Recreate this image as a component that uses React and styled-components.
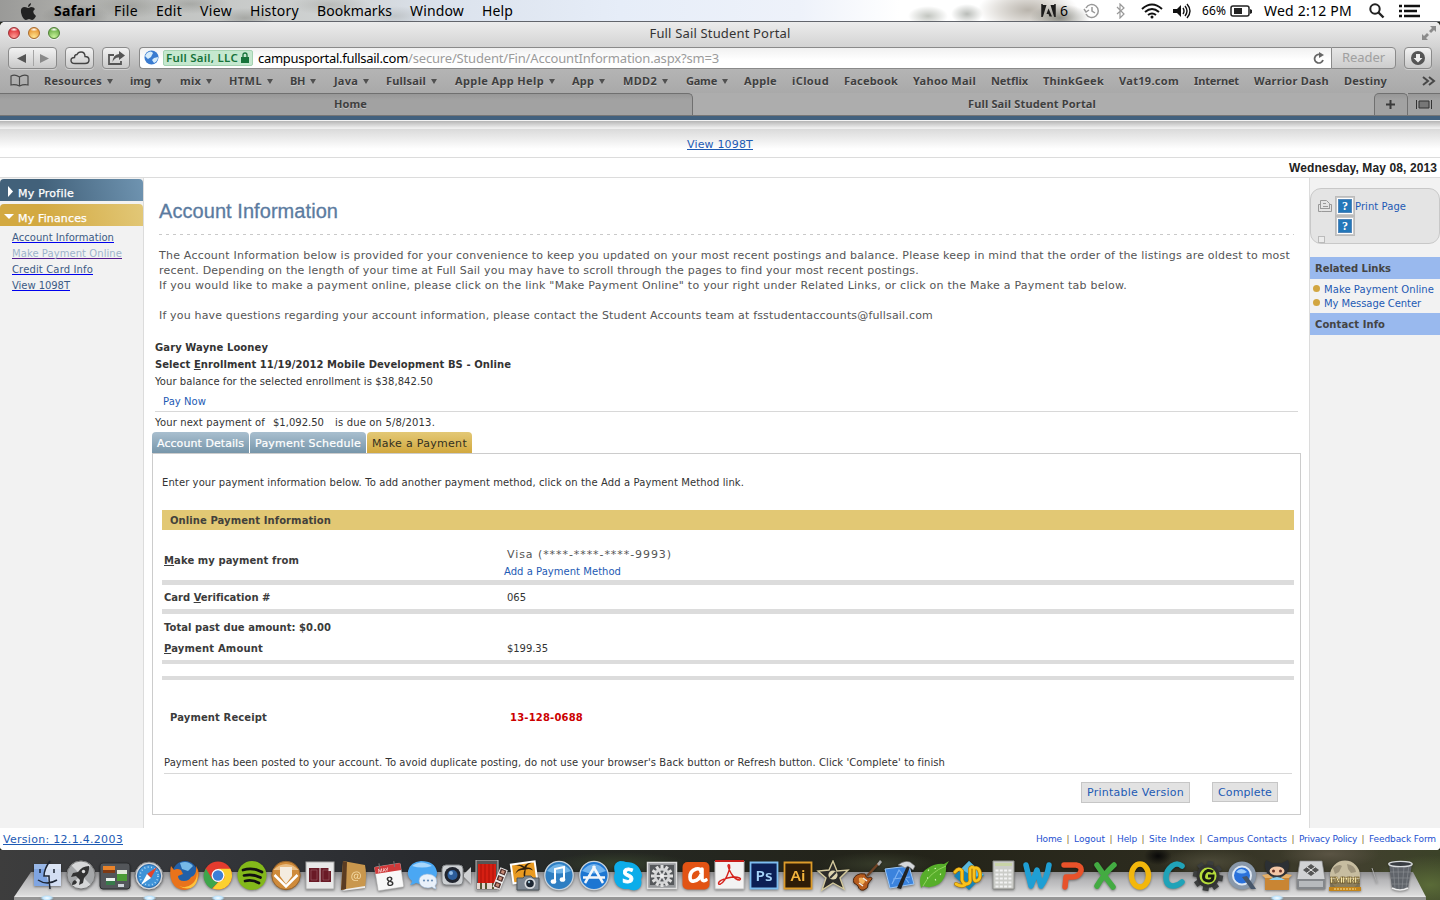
import React, { useLayoutEffect, useRef, useState } from 'react';
import styled, { createGlobalStyle, css } from 'styled-components';

const UI = '"Noto Sans", "Open Sans", sans-serif';
const VERDANA = '"DejaVu Sans", sans-serif';
const ARIAL = '"Liberation Sans", sans-serif';

const Global = createGlobalStyle`
  * { box-sizing: border-box; }
  body { margin: 0; overflow: hidden; font-family: ${VERDANA}; font-size: 10px; color: #333; }
  svg { display: block; flex: none; }
`;

const FitSpan = styled.span`
  display: inline-block;
  white-space: pre;
  flex: none;
  text-decoration: inherit;
`;

/* Tracks the text out (or in) until it is w pixels wide. */
function Fit({ w, children }) {
  const ref = useRef(null);
  const [spacing, setSpacing] = useState(0);
  useLayoutEffect(() => {
    const el = ref.current;
    const n = el.textContent.length;
    setSpacing((w - el.getBoundingClientRect().width) / n);
  }, [w]);
  return <FitSpan ref={ref} style={{ letterSpacing: `${spacing}px` }}>{children}</FitSpan>;
}

const Screen = styled.div`
  width: 1440px;
  height: 900px;
  display: flex;
  flex-direction: column;
  overflow: hidden;
  background: #25281f;
`;

/* ---------- menu bar ---------- */
const MenuBar = styled.header`
  height: 22px;
  flex: none;
  display: flex;
  align-items: center;
  padding: 0 20px;
  color: #000;
  font: 14px/21px ${UI};
  border-bottom: 1px solid #62656c;
  background:
    radial-gradient(ellipse 30px 14px at 1060px 18px, #77786fcc, transparent),
    radial-gradient(ellipse 50px 22px at 1028px 10px, #b9b4ac, #c5c0b880 60%, transparent),
    radial-gradient(ellipse 20px 10px at 928px 16px, #9a9f9699, transparent),
    radial-gradient(ellipse 16px 10px at 967px 14px, #b9bcb8, transparent),
    radial-gradient(ellipse 34px 12px at 75px 16px, #77787599, transparent),
    radial-gradient(ellipse 40px 12px at 130px 6px, #8c8d8880, transparent),
    radial-gradient(ellipse 40px 10px at 190px 4px, #8c8d8880, transparent),
    radial-gradient(ellipse 30px 10px at 245px 18px, #8c8d8890, transparent),
    radial-gradient(ellipse 40px 10px at 330px 5px, #9c9d9870, transparent),
    radial-gradient(ellipse 30px 10px at 395px 16px, #a3a7a870, transparent),
    linear-gradient(90deg, #9a9a98 0, #aaaaa7 60px, #c2c4c2 170px, #cfd2d2 330px, #dbe2ec 440px, #e6edf8 620px, #eef2fa 800px, #fff 900px, #fff 1440px);
`;
const Menus = styled.nav`
  display: flex;
  gap: 18px;
  margin-left: 18px;
  flex: 1;
`;
const Menu = styled.span`
  font-weight: ${p => (p.$bold ? 700 : 400)};
`;
const Tray = styled.div`
  display: flex;
  align-items: center;
`;
const TrayItem = styled.div`
  width: ${p => p.$w}px;
  flex: none;
  font-size: ${p => p.$size || 14}px;
  display: flex;
  align-items: center;
`;

/* ---------- browser window ---------- */
const Window = styled.section`
  height: 828px;
  flex: none;
  display: flex;
  flex-direction: column;
  border-radius: 5px 5px 4px 4px;
  overflow: hidden;
  background: #fff;
`;
const Chrome = styled.div`
  height: 71px;
  flex: none;
  display: flex;
  flex-direction: column;
  background: linear-gradient(#ececec 0, #d4d4d4 24px, #b4b4b4 48px, #a9a9a9 71px);
`;
const TitleBar = styled.div`
  height: 22px;
  display: grid;
  grid-template-columns: 100px 1fr 100px;
  align-items: center;
  font: 13px/22px ${UI};
  color: #333;
`;
const Lights = styled.div`
  display: flex;
  gap: 8px;
  padding-left: 8px;
`;
const Light = styled.i`
  width: 12px;
  height: 12px;
  border-radius: 50%;
  border: 1px solid ${p => p.$edge};
  background: radial-gradient(ellipse 4px 2px at 50% 15%, #fff, transparent), radial-gradient(circle at 50% 90%, ${p => p.$glow}, ${p => p.$mid} 75%);
  box-shadow: 0 1px 0 #ffffffa0;
`;
const Title = styled.div` text-align: center; `;
const TitleEnd = styled.div`
  display: flex;
  justify-content: flex-end;
  padding-right: 4px;
`;
const Toolbar = styled.div`
  height: 26px;
  display: flex;
  align-items: center;
  padding: 1px 8px 0;
`;
const ToolButton = styled.div`
  border: 1px solid #8a8a8a;
  border-radius: 4px;
  background: linear-gradient(#f2f2f2, #c9c9c9);
  box-shadow: 0 1px 0 #ffffff60;
  width: ${p => p.$w}px;
  height: 22px;
  margin-right: ${p => p.$after}px;
  flex: none;
  display: flex;
  align-items: center;
  justify-content: center;
`;
const Address = styled.div`
  height: 22px;
  flex: 1;
  display: flex;
  align-items: center;
  border: 1px solid #8a8a8a;
  border-right: 0;
  border-radius: 4px 0 0 4px;
  background: linear-gradient(#f1f1f1, #fff 60%);
  padding: 0 6px 0 4px;
  font: 13px/20px ${UI};
  color: #9b9b9b;
`;
const Cert = styled.div`
  height: 16px;
  width: 90px;
  margin: 0 5px 0 4px;
  padding-left: 2px;
  display: flex;
  gap: 3px;
  align-items: center;
  border: 1px solid #a5d3b2;
  border-radius: 2px;
  background: #c5e8cf;
  color: #17733a;
  font: 600 11.5px/14px ${UI};
`;
const Host = styled.span` color: #000; `;
const Spacer = styled.div` flex: 1; `;
const Reader = styled.div`
  width: 65px;
  height: 22px;
  flex: none;
  border: 1px solid #8a8a8a;
  border-radius: 0 4px 4px 0;
  background: linear-gradient(#e6e6e6, #cdcdcd);
  color: #a0a0a0;
  font: 13px/19px ${UI};
  text-align: center;
  margin-right: 8px;
`;
const Bookmarks = styled.div`
  height: 23px;
  display: flex;
  align-items: center;
  padding: 0 4px 1px 10px;
  font: 700 11px/20px ${UI};
  color: #3f3f3f;
  text-shadow: 0 1px 0 #ffffff60;
`;
const BookIcon = styled.div` width: 34px; `;
const Bookmark = styled.div`
  width: ${p => p.$cell}px;
  flex: none;
  display: flex;
  align-items: center;
  gap: 5px;
`;
const Caret = styled.i`
  border: 3.5px solid transparent;
  border-top: 5px solid #505050;
  border-bottom: 0;
`;
const TabStrip = styled.div`
  height: 23px;
  flex: none;
  display: flex;
  background: #adadad;
  border-bottom: 1px solid #767676;
  font: 700 11px/21px ${UI};
  color: #3f3f3f;
  text-shadow: 0 1px 0 #ffffff60;
`;
const WindowTab = styled.div`
  width: ${p => p.$w}px;
  flex: none;
  padding-left: ${p => p.$pad}px;
  ${p => p.$back && css`
    background: linear-gradient(#979797, #a2a2a2 6px, #a2a2a2);
    border: solid #707070;
    border-width: 1px ${p.$open ? 0 : 1}px 0 ${p.$left ? 1 : 0}px;
    border-radius: ${p.$left ? '5px' : 0} ${p.$open ? 0 : '5px'} 0 0;
    line-height: 18px;
    display: flex;
    align-items: center;
    padding-bottom: 1px;
  `}
`;

/* ---------- portal page ---------- */
const Page = styled.div`
  flex: 1;
  display: flex;
  flex-direction: column;
  background: #fff;
`;
const BrandStrip = styled.div`
  height: 5px;
  background: #42617e;
  border-bottom: 1px solid #f4f4f4;
`;
const TopLinks = styled.div`
  height: 37px;
  border-bottom: 1px solid #dcdcdc;
  background: linear-gradient(#b5b5b5, #efefef 7px, #efefef 8px, #dadada 8px, #fff 28px);
  padding-top: 16px;
  display: flex;
  justify-content: center;
  font-size: 11px;
  line-height: 16px;
`;
const Link = styled.a`
  color: ${p => p.$color || '#1d5ab4'};
  text-decoration: ${p => (p.$plain ? 'none' : 'underline')};
  text-decoration-color: ${p => p.$line || 'currentColor'};
  text-decoration-thickness: 1px;
  text-decoration-skip-ink: none;
  text-underline-offset: 1px;
`;
const DateRow = styled.div`
  height: 20px;
  border-bottom: 1px solid #dcdcdc;
  padding-right: 3px;
  text-align: right;
  font: 700 12px/20px ${ARIAL};
  color: #222;
`;
const Columns = styled.div`
  height: 650px;
  display: grid;
  grid-template-columns: 144px 1165px 131px;
`;
const Sidebar = styled.aside`
  background: #f2f2f2;
  border-right: 1px solid #dcdcdc;
  padding-top: 1px;
`;
const SideHead = styled.div`
  height: 22px;
  margin-bottom: 3px;
  padding: 7px 0 0 ${p => p.$pad}px;
  display: flex;
  gap: ${p => p.$gap}px;
  align-items: flex-start;
  border-radius: 4px 4px 0 0;
  background: linear-gradient(75deg, ${p => p.$from} 30%, ${p => p.$to});
  color: #fff;
  font-size: 11px;
  line-height: 16px;
  -webkit-text-stroke: .25px #fff;
`;
const SideLinks = styled.div`
  display: flex;
  flex-direction: column;
  padding: 1px 0 0 12px;
  line-height: 16px;
`;
const Main = styled.main`
  padding: 0 9px 0 8px;
  background: #fff;
`;
const Heading = styled.h1`
  margin: 0 6px 0 7px;
  height: 57px;
  padding-top: 21px;
  font: 400 20px/24px ${ARIAL};
  color: #5b7b9f;
  -webkit-text-stroke: .3px #5b7b9f;
  background: repeating-linear-gradient(90deg, #c9c9c9 0 3px, transparent 3px 7px) 0 56px / 1135px 1px no-repeat;
`;
const Intro = styled.div`
  margin: 13px 7px 16px;
  color: #555;
  font-size: 11px;
  line-height: 15px;
`;
const Line = styled.div`
  height: ${p => p.$h || 15}px;
  line-height: ${p => p.$h || 15}px;
  padding-left: ${p => p.$pad || 0}px;
  font-weight: ${p => (p.$bold ? 700 : 400)};
  color: ${p => p.$color || 'inherit'};
  display: flex;
`;
const Summary = styled.div`
  margin: 0 2px 0 3px;
  height: 93px;
  color: #333;
`;
const Rule = styled.div`
  height: 1px;
  background: #d8d8d8;
  margin: ${p => p.$m || 0};
`;
const Tabs = styled.div`
  display: flex;
  gap: 1px;
  height: 21px;
`;
const Tab = styled.div`
  width: ${p => p.$w}px;
  height: 21px;
  padding: 1px 0 0 5px;
  border-radius: 4px 4px 0 0;
  font-size: 11px;
  line-height: 22px;
  color: ${p => (p.$on ? '#33301f' : '#fff')};
  background: ${p => (p.$on ? 'linear-gradient(#e3c876, #d2a93f)' : 'linear-gradient(#a9bfcf, #7796aa)')};
  -webkit-text-stroke: ${p => (p.$on ? '0' : '.2px #fff')};
`;
const Panel = styled.section`
  width: 1149px;
  height: 362px;
  border: 1px solid #ccc;
  padding: 20px 6px 0 9px;
  display: flex;
  flex-direction: column;
`;
const Band = styled.div`
  height: ${p => p.$h}px;
  line-height: ${p => p.$h}px;
  padding: 1px 0 0 ${p => p.$pad}px;
  margin-top: ${p => p.$top || 0}px;
  background: ${p => p.$bg};
  font-weight: 700;
  color: ${p => p.$color || '#42413b'};
`;
const FormRow = styled.div`
  display: grid;
  grid-template-columns: ${p => p.$label || 343}px 1fr;
  height: ${p => p.$h}px;
  align-items: ${p => p.$align || 'center'};
  padding: ${p => p.$p || '2px 0 0 2px'};
`;
const Label = styled.div`
  font-weight: 700;
  color: #3b3b3b;
  line-height: 16px;
  height: 16px;
`;
const Value = styled.div`
  line-height: 16px;
  height: 16px;
  color: ${p => p.$color || '#333'};
  font-weight: ${p => (p.$bold ? 700 : 400)};
`;
const Stack = styled.div`
  display: flex;
  flex-direction: column;
  margin: 4px 0 0 -3px;
  line-height: 17px;
`;
const Method = styled.span`
  padding-left: 3px;
  font-size: 11px;
  color: #555;
`;
const ThickRule = styled.div`
  height: ${p => p.$h || 4}px;
  flex: none;
  margin-top: ${p => p.$top || 0}px;
  background: #dcdcdc;
`;
const Actions = styled.div`
  display: flex;
  gap: 22px;
  justify-content: flex-end;
  align-items: flex-start;
  padding: 8px 16px 0;
`;
const Action = styled.button`
  height: ${p => p.$h}px;
  width: ${p => p.$w}px;
  padding: 1px 0 0;
  border: 1px solid #c6c6c6;
  background: #e2e2e2;
  color: #1d5ab4;
  font: 11px/18px ${VERDANA};
`;
const Rail = styled.aside`
  border-left: 1px solid #dcdcdc;
  background: #f2f2f2;
  padding-top: 10px;
`;
const PrintBox = styled.div`
  height: 56px;
  border: 1px solid #c8c8c8;
  border-radius: 11px;
  background: #e4e4e4;
  padding: 7px 0 0 7px;
  margin-bottom: 13px;
  display: grid;
  grid-template-columns: 17px 20px 1fr;
  grid-template-rows: 20px 20px 8px;
  line-height: 22px;
`;
const Help = styled.div`
  width: 20px;
  height: 20px;
  border: 1px solid #bcbcbc;
  outline: 1px solid #c9c9c9;
  outline-offset: -2px;
  padding: 2px;
  background: #fff;
  grid-column: 2;
`;
const HelpMark = styled.div`
  height: 14px;
  border: 1px solid #5186b9;
  background: #2377b9;
  color: #fff;
  font: 700 12px/12px "Liberation Serif", serif;
  text-align: center;
`;
const Corner = styled.i`
  width: 7px;
  height: 7px;
  border: 1px solid #bbb;
  background: #ececec;
`;
const RailLinks = styled.div`
  height: 34px;
  padding: 4px 3px 2px;
`;
const RailLink = styled.div`
  height: 14px;
  line-height: 14px;
  display: flex;
  gap: 4px;
`;
const Dot = styled.i`
  width: 7px;
  height: 7px;
  margin-top: 2px;
  border-radius: 50%;
  background: #d2a641;
`;
const Footer = styled.footer`
  height: 22px;
  display: flex;
  align-items: center;
  padding: 0 4px 0 3px;
  font-size: 11px;
`;
const FooterLinks = styled.div`
  margin-left: auto;
  display: flex;
  font-size: 9px;
  line-height: 22px;
`;
const Bar = styled.span`
  width: 12px;
  text-align: center;
  color: #8a6a2c;
`;

/* ---------- dock ---------- */
const Desktop = styled.div`
  height: 50px;
  flex: none;
  position: relative;
  background:
    radial-gradient(ellipse 14px 9px at 1158px 6px, #080808, transparent),
    radial-gradient(ellipse 60px 30px at 1430px 35px, #5a6b38, transparent),
    radial-gradient(ellipse 50px 14px at 1330px 4px, #5a5444, transparent),
    radial-gradient(ellipse 50px 14px at 1210px 12px, #4c4a38, transparent),
    radial-gradient(ellipse 60px 12px at 880px 14px, #363b2a, transparent),
    radial-gradient(ellipse 70px 12px at 620px 14px, #35402c, transparent),
    linear-gradient(90deg, #3d3d3d 0, #35373b 180px, #292b2f 420px, #252823 600px, #232319 900px, #2c2b1e 1150px, #42402f 1350px, #3b4228 1440px);
`;
const Shelf = styled.div`
  position: absolute;
  left: 14px;
  top: 22px;
  width: 1412px;
  height: 28px;
  background: linear-gradient(#8e8e90 0, #b5b5b7 8px, #dcdcdc 23px, #ececec 25px, #969696 25px);
  clip-path: polygon(17px 0, 1399px 0, 1412px 25px, 1412px 28px, 0 28px, 0 25px);
`;
const Apps = styled.div`
  position: absolute;
  left: 30px;
  top: 10px;
  height: 40px;
  display: flex;
`;
const DockApp = styled.div`
  width: ${p => p.$w || 34.17}px;
  height: 40px;
  flex: none;
  filter: drop-shadow(0 1px 1px #0006);
  background: ${p => (p.$run ? 'radial-gradient(ellipse 7px 3px at 50% 38px, #fff, #bfe6ff 60%, transparent)' : 'none')};
`;

const B = 'Noto Sans, sans-serif';
const petals = (n, f) => Array.from({ length: n }, (_, i) => f(i, (360 / n) * i));

const icons = [
  ['finder', <><path d="M4 4h27v22H4z" fill="#7fa5e2" /><path d="M18 4h13v22H19l-2-9h-3q0-8 4-13" fill="#d3def2" /><path d="M4 4h27v5H4z" fill="#fff" opacity=".2" /><path d="M20 1q-6 8-6 15h5q0 6 1 13M10 9v4M24 9v4M8 20q9 6 19 0" fill="none" stroke="#1c2432" strokeWidth="1.5" /></>, 1],
  ['rocket', <><circle cx="17" cy="15" r="14.3" fill="#a5a7a9" /><path d="M17 15L7 5Q17-3 27 5zM17 15l10 10Q17 33 7 25z" fill="#d6d7d8" /><circle cx="17" cy="15" r="14" fill="none" stroke="#777" /><path d="M25 6q-7 0-11 6l-5 1-2 4 5-1 4 4-1 5 4-2 1-5q6-5 5-12M11 20q-3 1-3 5 4 0 5-3z" fill="#333" /><circle cx="19.500" cy="11.500" r="1.700" fill="#ddd" /></>],
  ['mission', <><rect x="2" y="3" width="30" height="26" rx="3" fill="#53565a" stroke="#2b2c2e" /><path d="M5 6h12v7H5z" fill="#e9832a" /><path d="M5 10h12v3H5z" fill="#7f3b15" /><path d="M19 10h10v11H19z" fill="#4b9b35" /><path d="M19 10h10v4H19z" fill="#dfe6d8" /><path d="M8 18h9v7H8z" fill="#edf2ef" /><path d="M8 21h9v4H8z" fill="#387a4b" /><path d="M20 24h6v3h-6z" fill="#cfd4da" /></>],
  ['safari', <><circle cx="17" cy="16" r="14" fill="#d3d5d8" stroke="#77797c" /><circle cx="17" cy="16" r="11.500" fill="#3f93d8" stroke="#2c68a7" /><circle cx="17" cy="16" r="9" fill="none" stroke="#b9dcf6" strokeDasharray="1 2.4" strokeWidth="1.600" /><path d="M25 7l-6 11-4-4z" fill="#e2452d" /><path d="M9 25l6-11 4 4z" fill="#fff" /></>, 1],
  ['firefox', <><circle cx="18" cy="13.5" r="12.5" fill="#2260a8" /><path d="M13 3q8-3 13 3l-5 5-6-2z" fill="#76b9e8" /><path d="M4 6l3 4q3-2 7 0l2 4-5 2q0 5 6 5 5 0 7-4 6-2 5-11 5 7 1 15-4 8-12 9-9 0-13-8-3-8-1-16" fill="#e9731b" /><path d="M29 8q3 10-4 16-6 5-13 2 9 5 15 0 6-7 2-18" fill="#fdc23c" /></>],
  ['chrome', <><circle cx="17" cy="15.500" r="14" fill="#e33b2e" /><path d="M4.900 8.500L11 19l6 3.500-6.500 6.200A14 14 0 0 1 4.900 8.500" fill="#3da64a" /><path d="M17 8.800h12.300A14 14 0 0 1 11.500 28.400L17 22.500l6-3.500q2-6-6-10.200" fill="#fbd02f" /><circle cx="17" cy="15.500" r="6.500" fill="#fff" /><circle cx="17" cy="15.500" r="5.200" fill="#3d7fd6" /></>, 1],
  ['spotify', <><circle cx="17" cy="15.500" r="14.500" fill="#83b81a" /><path d="M8 10q10-3 19 2M9 15.500q9-2 16.500 2M10 21q7-2 14 2" fill="none" stroke="#111" strokeWidth="2.700" strokeLinecap="round" /></>],
  ['downloads', <><circle cx="17" cy="15.500" r="14.200" fill="#cf8b3b" stroke="#94622b" /><path d="M4 10q13-12 26 0" fill="#e9bd83" /><path d="M11 7h12v9l-6 8-6-8z" fill="#f4ece0" /><path d="M5.500 15L17 26.500 28.500 15" fill="none" stroke="#fff" strokeWidth="2.500" /></>],
  ['photos', <><rect x="3" y="2" width="28" height="27" fill="#e8e8e8" stroke="#aaa" /><rect x="6" y="8" width="10.500" height="14" fill="#6a1a26" /><rect x="17.500" y="8" width="10.500" height="14" fill="#6a1a26" /><path d="M8 10h6v10H8zM20 10h6v10h-6z" fill="none" stroke="#9c6068" strokeWidth=".6" /><path d="M25.500 8H28v3h-2.500z" fill="#eee" /></>],
  ['contacts', <><path d="M6 1l22 4q2 9 0 23l-24 2z" fill="#c9974d" /><path d="M6 1l4 1-1 27-5 1z" fill="#5b3c22" /><path d="M9 29l19-3v2L5 31z" fill="#eee" /><text x="19" y="20" fontFamily={B} fontSize="12" fill="#f3d7a0" textAnchor="middle" transform="rotate(8 19 18)">@</text></>],
  ['calendar', <g transform="rotate(-9 17 16)"><rect x="4" y="5" width="26" height="24" rx="1" fill="#f8f8f8" stroke="#aaa" strokeWidth=".5" /><path d="M4 5h26v7H4z" fill="#d0393a" /><path d="M9 2v6M24 2v6" stroke="#777" /><text x="7" y="11" fontSize="5" fontFamily={B} fill="#fff">MAY</text><text x="17" y="26" fontSize="13" fontFamily={B} fontWeight="600" fill="#333" textAnchor="middle">8</text></g>],
  ['messages', <><path d="M4 25q2-2 2-4-5-4-4-10Q4 2 15 1q14 0 16 11 0 11-15 12-4 0-6-1-3 2-6 2" fill="#4aa7f3" /><path d="M6 6q9-7 20 0-10 3-20 0" fill="#a7d6fb" /><path d="M30 29q0-2-1-3 3-3 1-8-3-4-9-4-8 1-8 7 1 7 9 7 2 0 4-1 2 2 4 2" fill="#e9f1fa" stroke="#9bb8d8" strokeWidth=".6" /><circle cx="18" cy="20.500" r="1.100" fill="#6d90b7" /><circle cx="22" cy="20.500" r="1.100" fill="#6d90b7" /><circle cx="26" cy="20.500" r="1.100" fill="#6d90b7" /></>],
  ['facetime', <><rect x="2" y="5" width="21" height="20" rx="4" fill="#cdd0d3" stroke="#808386" /><path d="M24 14l7-7v17l-7-7z" fill="#cfd1d3" /><circle cx="12.500" cy="15" r="8" fill="#20242e" /><circle cx="12.500" cy="15" r="5" fill="#2c5d9b" /><circle cx="11" cy="13" r="2" fill="#91bce8" /></>],
  ['photobooth', <><path d="M2 0h22v30H2z" fill="#555" stroke="#bbb" /><path d="M4 4h18v19H4z" fill="#d51f12" /><path d="M7 4v19M11 4v19M15 4v19M19 4v19" stroke="#a31008" strokeWidth=".8" /><path d="M3 23h20v6H3z" fill="#e2d7d0" /><path d="M7 23v6M12 23v6M19 23v6" stroke="#553" strokeWidth="2" /><g transform="rotate(22 26 19)"><path d="M22 8h8v21h-8z" fill="#eee" /><path d="M23 9h6v5h-6zM23 16h6v5h-6zM23 23h6v5h-6z" fill="#53302b" /><path d="M24.500 10h3v3h-3zM24.500 17h3v3h-3zM24.500 24h3v3h-3z" fill="#c98d78" /></g></>],
  ['iphoto', <><g transform="rotate(-8 15 12)"><path d="M3 2h26v21H3z" fill="#fff" /><path d="M5 4h22v17H5z" fill="#e99a21" /><path d="M16 21q-2-7 1-11-7-1-10 3 3-6 9-5-5-4-8-3 6-2 9 2 3-4 8-3-5 1-6 4 5 0 6 4-3-3-7-2-2 5-1 11z" fill="#30200c" /></g><path d="M9 18h6l2-2h6l2 2h6v12H9z" fill="#7d8792" stroke="#4f565d" /><circle cx="22" cy="23.500" r="5.500" fill="#d9dcdf" /><circle cx="22" cy="23.500" r="3.800" fill="#1d2733" /><circle cx="21" cy="22" r="1.200" fill="#9bc" /></>],
  ['itunes', <><circle cx="17" cy="15.500" r="14.200" fill="#2e7ec2" stroke="#c9d3dc" strokeWidth="1.300" /><path d="M5 11q12-14 24 0-12 5-24 0" fill="#6fb2e6" /><path d="M13 21V9l9-2v12" fill="none" stroke="#fff" strokeWidth="2" /><ellipse cx="11.500" cy="21.500" rx="2.800" ry="2.300" fill="#fff" /><ellipse cx="20.500" cy="19.500" rx="2.800" ry="2.300" fill="#fff" /></>],
  ['appstore', <><circle cx="17" cy="15.500" r="14.200" fill="#1d76d2" stroke="#c9d3dc" strokeWidth="1.300" /><path d="M5 11q12-14 24 0-12 5-24 0" fill="#6fb2ee" /><path d="M8 23L18 6M26 23L16 6M6 17.500h22" fill="none" stroke="#f3f6fa" strokeWidth="2.500" /></>],
  ['skype', <><path d="M9 1q4 0 6 1 13 0 16 13 0 2-1 4 2 9-5 11-4 1-7-1Q4 30 3 17q0-2 1-4Q1 3 9 1" fill="#0cadea" /><text x="17" y="23" fontSize="21" fontFamily={B} fontWeight="700" fill="#fff" stroke="#fff" strokeWidth=".8" textAnchor="middle">S</text></>],
  ['settings', <><rect x="2.500" y="2.500" width="29" height="26" fill="#97999c" stroke="#e0e0e0" strokeWidth="1.500" /><path d="M5 5h24v20H5z" fill="#55585b" /><g transform="translate(17 16)">{petals(12, (i, a) => <path key={i} d="M-1.500-11h3v5h-3z" fill="#dedede" transform={`rotate(${a})`} />)}<circle r="8" fill="#d5d6d7" /><circle r="5.500" fill="#55585b" />{petals(3, (i, a) => <path key={i} d="M-1-6h2v12h-2z" fill="#d5d6d7" transform={`rotate(${a + 30})`} />)}<circle r="2" fill="#eee" /></g></>],
  ['aptana', <><rect x="3.500" y="2" width="27" height="27.500" rx="5" fill="#e25314" /><path d="M23 9v9q0 4 4 2M22 12q0-4-5-3-6 2-6 8 0 5 4 4 6-1 8-9" fill="none" stroke="#fff" strokeWidth="3.600" strokeLinecap="round" /></>],
  ['acrobat', <><path d="M2 1h29v28H2z" fill="#f3f3f3" stroke="#bbb" /><path d="M2 0h29v2H2z" fill="#c71f1b" /><path d="M15 6q0-2 1.500-1 1 3-1 7-3 9-8 12-2 1-2-1 1-3 9-5 8-2 12 0 2 1 0 2-4 0-8-6-3-5-3.500-8" fill="none" stroke="#d5221c" strokeWidth="1.400" /></>],
  ['ps', <><path d="M3.500 2.500h27v26h-27z" fill="#0b1f55" stroke="#7cbdf0" strokeWidth="1.800" /><text x="17" y="21" fontSize="15" fontFamily={B} fontWeight="600" fill="#a5d4fa" textAnchor="middle" textLength="17" lengthAdjust="spacingAndGlyphs">Ps</text></>],
  ['ai', <><path d="M3.500 2.500h27v26h-27z" fill="#2e1c07" stroke="#dd9b2a" strokeWidth="1.800" /><text x="17" y="21" fontSize="15" fontFamily={B} fontWeight="600" fill="#f4b43c" textAnchor="middle" textLength="15" lengthAdjust="spacingAndGlyphs">Ai</text></>],
  ['imovie', <><path d="M17 1l4 10 11-1-8 8 4 11-11-6-11 7 4-12-8-7 11-1z" fill="#2c2b28" stroke="#d4c99c" strokeWidth="1.400" /><circle cx="17" cy="15" r="4.600" fill="#ddd3ad" /><path d="M14 18l6-6" stroke="#333" strokeWidth="2" /></>],
  ['garageband', <><path d="M17 16L29 3" stroke="#6f4325" strokeWidth="2.500" /><path d="M27 4l3-4 2 2-3 4z" fill="#aaa" /><path d="M15 14q-5-1-8 1-5 3-3 8 2 1 4 3 1 5 6 4 5-2 4-6 2-3 4-5 0-3-4-1-2 0-3-4" fill="#b65b1d" stroke="#4d260f" /><path d="M9 18q4-2 6 3-1 4-3 3-4-2-3-6" fill="#f2b25d" /><path d="M9 23l4 3M13 18l4 3" stroke="#eee" strokeWidth="1.500" /></>],
  ['xcode', <><path d="M1 9l24-3 5 18-24 4z" fill="#3b83dd" stroke="#9cc7f5" /><path d="M8 24L15 10l10 13M9 19l17-2" fill="none" stroke="#7db2f3" strokeWidth="1.200" /><path d="M23 6l3 1-9 22-4-1z" fill="#222" /><path d="M14 5q6-5 12-3l5 4-2 4-5-4-3 2q-3-3-7-3" fill="#d5d8da" stroke="#777" strokeWidth=".6" /></>],
  ['leaf', <><path d="M3 28Q-1 14 10 8q8-5 16-4l5-3-3 5q1 12-7 18-8 5-16 2z" fill="#57ae2a" /><path d="M5 26Q12 12 28 6" fill="none" stroke="#8fd35c" /><path d="M10 10l1 .5M17 8l.5 1M9 18h1M17 20l1-.5M22 14l1 .5" stroke="#d5f0b4" strokeWidth="1.500" /></>],
  ['w', <><path d="M17 1l15 14-15 15L2 16z" fill="#1684b6" /><path d="M17 1l15 14-10 2L9 9z" fill="#5bb8dc" /><path d="M3 12q4-5 7-1v9q1 4 5 4 4-1 3-6V9q1-3 4-1v9q0 4 2 4 5-1 4-8-1-5-4-5M4 24q5 3 9 1" fill="none" stroke="#a8760c" strokeWidth="4" strokeLinecap="round" /><path d="M3 12q4-5 7-1v9q1 4 5 4 4-1 3-6V9q1-3 4-1v9q0 4 2 4 5-1 4-8-1-5-4-5M4 24q5 3 9 1" fill="none" stroke="#f9c21c" strokeWidth="2.800" strokeLinecap="round" /></>],
  ['calculator', <><path d="M7 1h21v28H7z" fill="#cbccc8" stroke="#8c8d89" /><path d="M9 3h17v3H9z" fill="#c8d3a6" /><path d="M9.500 10.500h16M9.500 14.500h16M9.500 18.500h16M9.500 22.500h16M9.500 26.500h16" stroke="#f2f2f2" strokeWidth="2.200" strokeDasharray="3 1.300" /></>],
  ['word', <path d="M5 5l5 21 6-16 4 16Q26 18 28 5" fill="none" stroke="#1f9fd4" strokeWidth="5.500" strokeLinejoin="round" strokeLinecap="round" />],
  ['powerpoint', <path d="M9 5h12q6 1 5 6-2 6-9 6h-6l-1 10" fill="none" stroke="#e8522a" strokeWidth="5.500" strokeLinejoin="round" strokeLinecap="round" />],
  ['excel', <path d="M8 5q6 9 16 22M25 5Q15 14 8 26" fill="none" stroke="#43ab42" strokeWidth="5.500" strokeLinecap="round" />],
  ['outlook', <ellipse cx="17" cy="15.500" rx="8.500" ry="11.500" fill="none" stroke="#f3b70b" strokeWidth="5.500" />],
  ['communicator', <path d="M25 6q-5-4-10 0-6 5-6 11 0 9 7 9 5 0 9-4" fill="none" stroke="#20a3b8" strokeWidth="5.500" strokeLinecap="round" />],
  ['gamemaker', <g transform="translate(17 16)">{petals(8, (i, a) => <path key={i} d="M-3-15h6v6h-6z" fill="#3b3d3d" transform={`rotate(${a + 10})`} />)}<circle r="11.500" fill="#333" /><circle r="8.500" fill="#b5dc3a" /><path d="M5-4Q-1-8-4-2q-2 7 5 7 4 0 4-5H0" fill="none" stroke="#181b12" strokeWidth="3" /></g>],
  ['quicktime', <><circle cx="17" cy="15.500" r="14" fill="#8998aa" /><circle cx="17" cy="15.500" r="9" fill="#2a71db" stroke="#dfe8f3" strokeWidth="2" /><path d="M11 12q5-6 11 0-5 3-11 0" fill="#99cafb" /><path d="M17 17l9 12h5l-4-6-5-7z" fill="#46566a" /></>],
  ['github', <><path d="M6 0l6 3h10l6-3q2 6 0 10-1 7-11 7T6 10q-2-5 0-10" fill="#2c3034" /><ellipse cx="17" cy="11" rx="7.500" ry="4.500" fill="#f2c6a5" /><circle cx="13.500" cy="11" r="1.500" fill="#6a3328" /><circle cx="20.500" cy="11" r="1.500" fill="#6a3328" /><path d="M13 16h8v4h-8z" fill="#353b42" /><path d="M5 18h24v12H5z" fill="#c98533" /><path d="M5 18l-3-3 6-1 5 4zM29 18l3-3-6-1-5 4z" fill="#e7b066" /><path d="M9 20q8-6 16 0z" fill="#8ed0ee" /></>, 1],
  ['bootcamp', <><path d="M6 1h22l3 18v10H3V19z" fill="#d1d2d4" stroke="#888" strokeWidth=".7" /><path d="M3 19h28v10H3z" fill="#84878b" /><path d="M5 21h24v6H5z" fill="#b7babd" /><path d="M17 4l8 6-8 6-8-6z" fill="#555" /><path d="M13 7l8 6M21 7l-8 6" stroke="#eee" /></>],
  ['empire', <><circle cx="17" cy="15.500" r="15" fill="#c7bda0" /><path d="M5 8q6-5 9-2l-3 6-4 2zM19 4q8 1 9 8l-5 1-3-4z" fill="#9e947c" /><path d="M2 19h30v8H2z" fill="#776947" opacity=".75" /><text x="17" y="23" fontFamily="Liberation Serif, serif" fontSize="9" fontWeight="700" fill="#fae9a7" stroke="#574015" strokeWidth=".3" textAnchor="middle" textLength="30">EMPIRE</text><path d="M1 27h32v4H1z" fill="#c3851b" /><path d="M6 29h22" stroke="#ffe393" strokeDasharray="2 1" /></>],
  ['divider', <path d="M10 8l5 15" stroke="#aaa" />, 0, 22],
  ['trash', <><path d="M5 4l3 24q9 4 16 0l4-24z" fill="#60646a" /><path d="M9 6l2 22M14 7l1 22M20 7l-2 22M25 5l-3 23M6 12h21M7 18h19M8 24h17" stroke="#8d9196" strokeWidth=".6" /><ellipse cx="16.500" cy="4" rx="11.800" ry="2.700" fill="#383c41" stroke="#d9dcde" strokeWidth="1.300" /><path d="M8 28q8 4 16 0" fill="none" stroke="#eee" strokeWidth="1.500" /></>],
];

/* label, text width, cell width, has a folder arrow */
const bookmarks = [
  ['Resources', 58, 86, 1], ['img', 21, 50, 1], ['mix', 21, 49, 1], ['HTML', 33, 61, 1], ['BH', 15, 44, 1],
  ['Java', 24, 52, 1], ['Fullsail', 40, 69, 1], ['Apple App Help', 89, 117, 1], ['App', 22, 51, 1], ['MDD2', 34, 63, 1],
  ['Game', 31, 58, 1], ['Apple', 33, 48], ['iCloud', 37, 52], ['Facebook', 54, 69], ['Yahoo Mail', 63, 78],
  ['Netflix', 37, 52], ['ThinkGeek', 61, 76], ['Vat19.com', 60, 75], ['Internet', 45, 60], ['Warrior Dash', 75, 90], ['Destiny', 43, 78],
];
const menus = [['Safari', 42], ['File', 24], ['Edit', 26], ['View', 32], ['History', 49], ['Bookmarks', 75], ['Window', 54], ['Help', 31]];
const footerLinks = [['Home', 26], ['Logout', 31], ['Help', 20], ['Site Index', 46], ['Campus Contacts', 80], ['Privacy Policy', 58], ['Feedback Form', 67]];

const Svg = ({ w, h, children }) => <svg width={w} height={h} viewBox={`0 0 ${w} ${h}`} fill="none">{children}</svg>;

function TopMenu() {
  return (
    <MenuBar>
      <Svg w={16} h={18}><path d="M11 1q0 3-3 4 0-3 3-4M8 6q1 0 3-1 3 0 4 2-4 3 1 7-2 4-4 4l-3-1-3 1Q4 18 2 14q-3-8 2-9 2 0 4 1" fill="#222" /></Svg>
      <Menus>{menus.map(([t, w], i) => <Menu key={t} $bold={i === 0}><Fit w={w}>{t}</Fit></Menu>)}</Menus>
      <Tray>
        <TrayItem $w={42}><Svg w={19} h={14}><path d="M1 1h4.500L2 12.500H1zM9.500 1H14v11.500h-1zM7.500 4.500l3.500 8H8.500l-1-2.500h-2z" fill="#1c1c1c" /><path d="M1 0v13M14 0v13" stroke="#1c1c1c" strokeWidth="1.500" /></Svg><Fit w={8}>6</Fit></TrayItem>
        <TrayItem $w={33}><Svg w={18} h={16}><path d="M3 11a6.500 6.500 0 1 0 0-6M1 6l2 3 3-2M9 4v4l3 2" stroke="#999" strokeWidth="1.500" /></Svg></TrayItem>
        <TrayItem $w={25}><Svg w={10} h={16}><path d="M1 4l7 7-4 4V1l4 4-7 6" stroke="#999" strokeWidth="1.200" /></Svg></TrayItem>
        <TrayItem $w={32}><Svg w={22} h={16}><path d="M1 6q10-9 20 0M4 9q7-6 14 0M7 12q4-3 8 0" stroke="#111" strokeWidth="2" /><circle cx="11" cy="14" r="1.500" fill="#111" /></Svg></TrayItem>
        <TrayItem $w={29}><Svg w={18} h={16}><path d="M0 6h4l4-4v12l-4-4H0z" fill="#111" /><path d="M10 5q2 3 0 6M12 3q4 5 0 10M14 1q6 7 0 14" stroke="#111" strokeWidth="1.400" /></Svg></TrayItem>
        <TrayItem $w={28} $size={12}><Fit w={24}>66%</Fit></TrayItem>
        <TrayItem $w={34}><Svg w={22} h={12}><rect x="1" y="1" width="18" height="10" rx="2" stroke="#222" strokeWidth="1.500" /><path d="M4 3h8v6H4zM20 4l2 1v3l-2 1z" fill="#222" /></Svg></TrayItem>
        <TrayItem $w={105}><Fit w={88}>Wed 2:12 PM</Fit></TrayItem>
        <TrayItem $w={30}><Svg w={16} h={16}><circle cx="6" cy="6" r="4.700" stroke="#222" strokeWidth="2" /><path d="M9.500 9.500l5 5" stroke="#222" strokeWidth="2.400" /></Svg></TrayItem>
        <TrayItem $w={21}><Svg w={21} h={14}><path d="M0 2h3M0 7h3M0 12h3M5 2h16M5 7h13M5 12h16" stroke="#111" strokeWidth="2.600" /></Svg></TrayItem>
      </Tray>
    </MenuBar>
  );
}

function BrowserChrome() {
  return (
    <>
      <Chrome>
        <TitleBar>
          <Lights>
            <Light $edge="#9b3035" $mid="#e0343a" $glow="#ff9d96" />
            <Light $edge="#a7692b" $mid="#e99836" $glow="#ffe590" />
            <Light $edge="#4e7d35" $mid="#6fb04a" $glow="#c8f49a" />
          </Lights>
          <Title><Fit w={141}>Full Sail Student Portal</Fit></Title>
          <TitleEnd><Svg w={14} h={14}><path d="M8 0h6v6l-2-2-3 3-2-2 3-3zM0 8l2 2 3-3 2 2-3 3 2 2H0z" fill="#8b8b8b" /></Svg></TitleEnd>
        </TitleBar>
        <Toolbar>
          <ToolButton $w={49} $after={8}><Svg w={47} h={20}><path d="M17 6v9l-9-4.500z" fill="#555" /><path d="M31 6v9l9-4.500z" fill="#8a8a8a" /><path d="M24.500 2v16" stroke="#a5a5a5" /></Svg></ToolButton>
          <ToolButton $w={29} $after={8}><Svg w={20} h={14}><path d="M5 12.500q-4 0-4-3t3.500-3q0-3 2.500-3 1-2.500 4-2.500 4 0 4 4.500 4 0 4 3.500t-4 3.500z" stroke="#444" strokeWidth="1.400" /></Svg></ToolButton>
          <ToolButton $w={28} $after={9}><Svg w={17} h={14}><path d="M6 4H1v9h12v-3" stroke="#555" strokeWidth="1.800" /><path d="M11 0l6 4.500-6 4.500V6.500Q7 6 4.500 11 5 3.500 11 3z" fill="#555" /></Svg></ToolButton>
          <Address>
            <Svg w={15} h={15}><circle cx="7.500" cy="7.500" r="7" fill="#3a7bd0" /><path d="M3 3q4-3 6 0l-2 4-3 2-3-3zM10 8l4-1q0 4-4 6l-2-3z" fill="#d7ecfb" /></Svg>
            <Cert><Fit w={72}>Full Sail, LLC</Fit><Svg w={8} h={11}><path d="M0 5h8v6H0z" fill="#17733a" /><path d="M2 5V3q0-2 2-2t2 2v2" stroke="#17733a" strokeWidth="1.300" /></Svg></Cert>
            <Host><Fit w={150}>campusportal.fullsail.com</Fit></Host><Fit w={311}>/secure/Student/Fin/AccountInformation.aspx?sm=3</Fit>
            <Spacer />
            <Svg w={12} h={12}><path d="M10 8a4.300 4.300 0 1 1-3-5.500" stroke="#666" strokeWidth="1.800" /><path d="M6 0l5 3-5 3z" fill="#666" /></Svg>
          </Address>
          <Reader><Fit w={43}>Reader</Fit></Reader>
          <ToolButton $w={28} $after={0}><Svg w={14} h={14}><circle cx="7" cy="7" r="7" fill="#555" /><path d="M5 3h4v4h2.500L7 11.500 2.500 7H5z" fill="#eee" /></Svg></ToolButton>
        </Toolbar>
        <Bookmarks>
          <BookIcon><Svg w={19} h={14}><path d="M9.500 3Q5 0 1 2v9q4-1 8.500 1Q14 10 18 11V2q-4-2-8.500 1v9" stroke="#484848" strokeWidth="1.200" /></Svg></BookIcon>
          {bookmarks.map(([t, w, cell, folder]) => <Bookmark key={t} $cell={cell}><Fit w={w}>{t}</Fit>{folder && <Caret />}</Bookmark>)}
          <Svg w={14} h={10}><path d="M1 1l5 4-5 4M7 1l5 4-5 4" stroke="#484848" strokeWidth="2" /></Svg>
        </Bookmarks>
      </Chrome>
      <TabStrip>
        <WindowTab $w={693} $pad={334} $back><Fit w={33}>Home</Fit></WindowTab>
        <WindowTab $w={681} $pad={275}><Fit w={128}>Full Sail Student Portal</Fit></WindowTab>
        <WindowTab $w={34} $pad={11} $back $left><Svg w={9} h={9}><path d="M4.500 0v9M0 4.500h9" stroke="#3a3a3a" strokeWidth="2" /></Svg></WindowTab>
        <WindowTab $w={32} $pad={8} $back $open><Svg w={16} h={9}><path d="M3 1h10v7H3z" fill="#777" stroke="#333" /><path d="M.5 0v9M15.500 0v9" stroke="#333" /></Svg></WindowTab>
      </TabStrip>
    </>
  );
}

function Account() {
  return (
    <Main>
      <Heading><Fit w={179}>Account Information</Fit></Heading>
      <Intro>
        <Line><Fit w={1131}>The Account Information below is provided for your convenience to keep you updated on your most recent postings and balance. Please keep in mind that the order of the listings are oldest to most</Fit></Line>
        <Line><Fit w={760}>recent. Depending on the length of your time at Full Sail you may have to scroll through the pages to find your most recent postings.</Fit></Line>
        <Line><Fit w={968}>If you would like to make a payment online, please click on the link "Make Payment Online" to your right under Related Links, or click on the Make a Payment tab below.</Fit></Line>
        <Line />
        <Line><Fit w={774}>If you have questions regarding your account information, please contact the Student Accounts team at fsstudentaccounts@fullsail.com</Fit></Line>
      </Intro>
      <Summary>
        <Line $h={17} $bold><Fit w={113}>Gary Wayne Looney</Fit></Line>
        <Line $h={17} $bold><Fit w={356}>Select <u>E</u>nrollment 11/19/2012 Mobile Development BS - Online</Fit></Line>
        <Line $h={17}><Fit w={278}>Your balance for the selected enrollment is $38,842.50</Fit></Line>
        <Line $h={24} $pad={8}><Link $plain><Fit w={43}>Pay Now</Fit></Link></Line>
        <Rule $m="-3px 0 2px" />
        <Line $h={17}><Fit w={110}>Your next payment of</Fit><Line $pad={8} $h={17}><Fit w={51}>$1,092.50</Fit></Line><Line $pad={11} $h={17}><Fit w={100}>is due on 5/8/2013.</Fit></Line></Line>
      </Summary>
      <Tabs>
        <Tab $w={97}><Fit w={87}>Account Details</Fit></Tab>
        <Tab $w={116}><Fit w={106}>Payment Schedule</Fit></Tab>
        <Tab $w={105} $on><Fit w={95}>Make a Payment</Fit></Tab>
      </Tabs>
      <Panel>
        <Line $h={17}><Fit w={582}>Enter your payment information below. To add another payment method, click on the Add a Payment Method link.</Fit></Line>
        <Band $h={20} $top={19} $pad={8} $bg="#e2c874"><Fit w={161}>Online Payment Information</Fit></Band>
        <FormRow $h={50} $p="12px 0 0 2px">
          <Label><Fit w={135}><u>M</u>ake my payment from</Fit></Label>
          <Stack><Method><Fit w={165}>Visa (****-****-****-9993)</Fit></Method><Link $plain><Fit w={117}>Add a Payment Method</Fit></Link></Stack>
        </FormRow>
        <ThickRule $h={5} />
        <FormRow $h={24} $p="1px 0 0 2px"><Label><Fit w={106}>Card <u>V</u>erification #</Fit></Label><Value><Fit w={19}>065</Fit></Value></FormRow>
        <ThickRule $h={5} />
        <FormRow $h={25} $p="3px 0 0 2px"><Label><Fit w={167}>Total past due amount: $0.00</Fit></Label></FormRow>
        <FormRow $h={21} $align="start"><Label><Fit w={99}><u>P</u>ayment Amount</Fit></Label><Value><Fit w={41}>$199.35</Fit></Value></FormRow>
        <ThickRule />
        <ThickRule $top={12} />
        <FormRow $h={74} $label={340} $p="2px 0 0 8px"><Label><Fit w={97}>Payment Receipt</Fit></Label><Value $bold $color="#c00"><Fit w={73}>13-128-0688</Fit></Value></FormRow>
        <Line $h={18} $pad={2}><Fit w={781}>Payment has been posted to your account. To avoid duplicate posting, do not use your browser's Back button or Refresh button. Click 'Complete' to finish</Fit></Line>
        <Rule $m="1px 2px 0" />
        <Actions>
          <Action $w={109} $h={21}><Fit w={97}>Printable Version</Fit></Action>
          <Action $w={66} $h={20}><Fit w={54}>Complete</Fit></Action>
        </Actions>
      </Panel>
    </Main>
  );
}

function Portal() {
  const nav = '#3c5b85';
  return (
    <Page>
      <BrandStrip />
      <TopLinks><Link><Fit w={66}>View 1098T</Fit></Link></TopLinks>
      <DateRow><Fit w={148}>Wednesday, May 08, 2013</Fit></DateRow>
      <Columns>
        <Sidebar>
          <SideHead $pad={8} $gap={5} $from="#42617a" $to="#6f94b1"><Svg w={5} h={13}><path d="M0 0l5 5.500L0 11z" fill="#fff" /></Svg><Fit w={56}>My Profile</Fit></SideHead>
          <SideHead $pad={4} $gap={4} $from="#d3a941" $to="#e2c878"><Svg w={10} h={10}><path d="M0 3h10L5 8z" fill="#fff" /></Svg><Fit w={69}>My Finances</Fit></SideHead>
          <SideLinks>
            <Link $color={nav} $line="#00e"><Fit w={102}>Account Information</Fit></Link>
            <Link $color="#9db4cb" $line="#551a8b"><Fit w={110}>Make Payment Online</Fit></Link>
            <Link $color={nav} $line="#00e"><Fit w={81}>Credit Card Info</Fit></Link>
            <Link $color={nav} $line="#00e"><Fit w={58}>View 1098T</Fit></Link>
          </SideLinks>
        </Sidebar>
        <Account />
        <Rail>
          <PrintBox>
            <Svg w={14} h={20}><path d="M3.500 15.500h-3v-7h2M11.500 8.500h2v7H3.500M2.500 12.500v-8h6l3 3v5z" stroke="#999" /><path d="M5 7.500h3M5 10.500h5M2 12.500h10" stroke="#999" /></Svg>
            <Help><HelpMark>?</HelpMark></Help>
            <Link $plain><Fit w={51}>Print Page</Fit></Link>
            <Help><HelpMark>?</HelpMark></Help>
            <div />
            <Corner />
          </PrintBox>
          <Band $h={22} $pad={5} $bg="#99b9ee" $color="#444"><Fit w={76}>Related Links</Fit></Band>
          <RailLinks>
            <RailLink><Dot /><Link $plain><Fit w={110}>Make Payment Online</Fit></Link></RailLink>
            <RailLink><Dot /><Link $plain><Fit w={97}>My Message Center</Fit></Link></RailLink>
          </RailLinks>
          <Band $h={22} $pad={5} $bg="#99b9ee" $color="#444"><Fit w={70}>Contact Info</Fit></Band>
        </Rail>
      </Columns>
      <Footer>
        <Link><Fit w={120}>Version: 12.1.4.2003</Fit></Link>
        <FooterLinks>
          {footerLinks.map(([t, w], i) => <React.Fragment key={t}>{i > 0 && <Bar>|</Bar>}<Link $plain $color="#2450d0"><Fit w={w}>{t}</Fit></Link></React.Fragment>)}
        </FooterLinks>
      </Footer>
    </Page>
  );
}

export default function App() {
  return (
    <Screen>
      <Global />
      <TopMenu />
      <Window>
        <BrowserChrome />
        <Portal />
      </Window>
      <Desktop>
        <Shelf />
        <Apps>{icons.map(([name, art, run, w]) => <DockApp key={name} $run={run} $w={w}><Svg w={w || 34} h={32}>{art}</Svg></DockApp>)}</Apps>
      </Desktop>
    </Screen>
  );
}
